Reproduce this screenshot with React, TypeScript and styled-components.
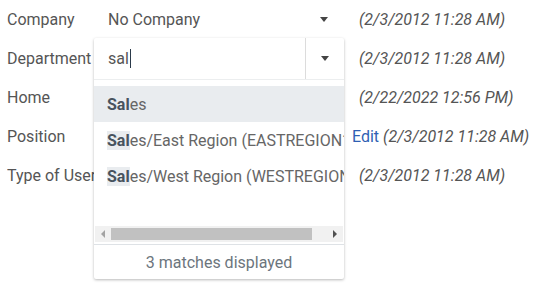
import React from "react";
import styled, { createGlobalStyle } from "styled-components";

const GlobalStyle = createGlobalStyle`
  body {
    margin: 0;
    background: #fff;
    font-family: Roboto, "Liberation Sans", Arial, sans-serif;
    color: #555;
  }
`;

interface rowType {
  label: string;
  value?: string;
  stamp: string;
  edit?: boolean;
}

interface optionType {
  head: string;
  rest: string;
}

const rows: rowType[] = [
  { label: "Company", value: "No Company", stamp: "(2/3/2012 11:28 AM)" },
  { label: "Department", stamp: "(2/3/2012 11:28 AM)" },
  { label: "Home", stamp: "(2/22/2022 12:56 PM)" },
  { label: "Position", stamp: "(2/3/2012 11:28 AM)", edit: true },
  { label: "Type of User", stamp: "(2/3/2012 11:28 AM)" },
];

const options: optionType[] = [
  { head: "Sal", rest: "es" },
  { head: "Sal", rest: "es/East Region (EASTREGION1)" },
  { head: "Sal", rest: "es/West Region (WESTREGION1)" },
];

const Page = styled.div`
  position: relative;
  width: 541px;
  height: 288px;
  padding-left: 7px;
  box-sizing: border-box;
`;

const Form = styled.div`
  display: grid;
  grid-template-columns: 100px 245px auto;
  grid-auto-rows: 39px;
  align-items: center;
  font-size: 16px;
`;

const Label = styled.div`
  white-space: nowrap;
  overflow: hidden;
`;

const Select = styled.div<{ $line?: boolean }>`
  display: flex;
  align-items: center;
  justify-content: space-between;
  height: 100%;
  width: 229px;
  padding-left: 1px;
  box-sizing: border-box;
  border-bottom: 1px solid ${(p) => (p.$line ? "#d8d8d8" : "transparent")};
`;

const Caret = styled.span`
  width: 0;
  height: 0;
  border-left: 4px solid transparent;
  border-right: 4px solid transparent;
  border-top: 5px solid #444;
  margin-right: 8px;
`;

const Stamp = styled.div<{ $edit?: boolean }>`
  white-space: nowrap;
  padding-left: ${(p) => (p.$edit ? "0" : "7px")};
  font-style: italic;
`;

const EditLink = styled.a`
  color: #2f5fb3;
  font-style: normal;
  text-decoration: none;
  margin-right: 4px;
`;

const Popup = styled.div`
  position: absolute;
  left: 94px;
  top: 38px;
  width: 250px;
  height: 241px;
  background: #fff;
  border-radius: 2px;
  box-shadow: 0 1px 3px rgba(0, 0, 0, 0.28);
  display: flex;
  flex-direction: column;
  overflow: hidden;
`;

const SearchBar = styled.div`
  display: flex;
  height: 41px;
  border-bottom: 1px solid #eceeef;
  flex-shrink: 0;
`;

const SearchText = styled.div`
  flex: 1;
  display: flex;
  align-items: center;
  padding-left: 14px;
  font-size: 16px;
  color: #555;
  border-right: 1px solid #dcdcdc;
`;

const TextCursor = styled.span`
  display: inline-block;
  width: 1px;
  height: 19px;
  background: #2b3a4a;
  margin-left: 1px;
`;

const ArrowBox = styled.div`
  width: 38px;
  display: flex;
  align-items: center;
  justify-content: center;

  ${Caret} {
    margin-right: 0;
  }
`;

const List = styled.div`
  flex: 1;
  padding-top: 6px;
  overflow: hidden;
`;

const Option = styled.div<{ $active?: boolean }>`
  height: 36px;
  display: flex;
  align-items: center;
  padding-left: 13px;
  white-space: nowrap;
  font-size: 16px;
  color: #666;
  background: ${(p) => (p.$active ? "#e9ecef" : "transparent")};
`;

const Match = styled.b`
  font-weight: 700;
  color: #48535e;
  background: #e9ecef;
`;

const Scrollbar = styled.div`
  display: flex;
  align-items: center;
  height: 16px;
  margin: 0 1px 2px;
  background: #f1f1f1;
  flex-shrink: 0;
`;

const ScrollArrow = styled.span<{ $dir: "left" | "right" }>`
  width: 16px;
  display: flex;
  justify-content: center;

  &::before {
    content: "";
    border-top: 4px solid transparent;
    border-bottom: 4px solid transparent;
    ${(p) =>
      p.$dir === "left"
        ? "border-right: 4px solid #a3a3a3;"
        : "border-left: 4px solid #505050;"}
  }
`;

const Thumb = styled.div`
  height: 12px;
  width: 201px;
  background: #c1c1c1;
`;

const Track = styled.div`
  flex: 1;
  display: flex;
`;

const Footer = styled.div`
  height: 34px;
  flex-shrink: 0;
  border-top: 1px solid #dee2e6;
  display: flex;
  align-items: center;
  justify-content: center;
  font-size: 16px;
  color: #6c757d;
`;

export default function App() {
  return (
    <Page>
      <GlobalStyle />
      <Form>
        {rows.map((row, i) => (
          <React.Fragment key={i}>
            <Label>{row.label}</Label>
            <Select $line={!!row.value}>
              {row.value && (
                <>
                  <span>{row.value}</span>
                  <Caret />
                </>
              )}
            </Select>
            <Stamp $edit={row.edit}>
              {row.edit && <EditLink href="#">Edit</EditLink>}
              {row.stamp}
            </Stamp>
          </React.Fragment>
        ))}
      </Form>

      <Popup>
        <SearchBar>
          <SearchText>
            sal
            <TextCursor />
          </SearchText>
          <ArrowBox>
            <Caret />
          </ArrowBox>
        </SearchBar>
        <List>
          {options.map((o, i) => (
            <Option key={i} $active={i === 0}>
              <Match>{o.head}</Match>
              {o.rest}
            </Option>
          ))}
        </List>
        <Scrollbar>
          <ScrollArrow $dir="left" />
          <Track>
            <Thumb />
          </Track>
          <ScrollArrow $dir="right" />
        </Scrollbar>
        <Footer>3 matches displayed</Footer>
      </Popup>
    </Page>
  );
}
